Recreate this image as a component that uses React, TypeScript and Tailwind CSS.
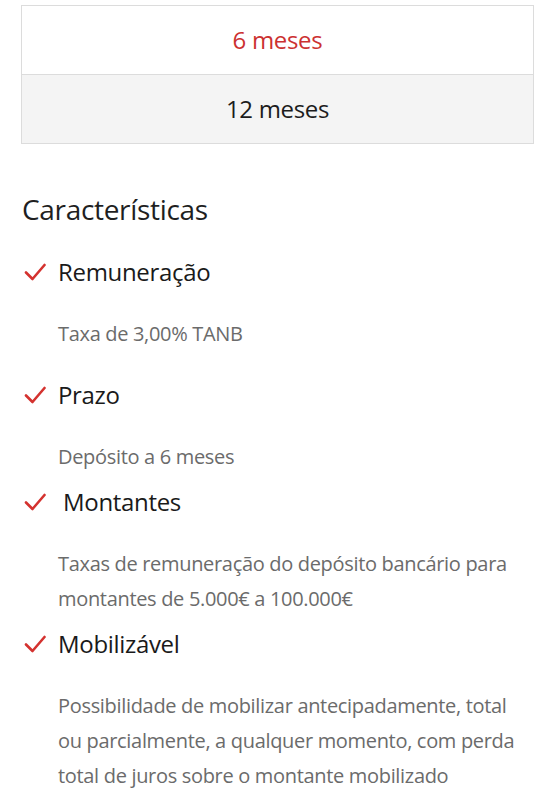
const font = { fontFamily: '"Open Sans", Lato, sans-serif' };

const Check = () => (
  <svg width="22" height="20" viewBox="0 0 22 20" className="shrink-0">
    <path d="M2 10.5 L8.5 17 L20.5 3" fill="none" stroke="#d4322f" strokeWidth="2.6" strokeLinecap="round" strokeLinejoin="round" />
  </svg>
);

type Item = { title: string; desc: string[]; after: string; indent?: string };

const items: Item[] = [
  { title: 'Remuneração', desc: ['Taxa de 3,00% TANB'], after: 'mb-[28px]' },
  { title: 'Prazo', desc: ['Depósito a 6 meses'], after: 'mb-[12px]' },
  {
    title: 'Montantes',
    desc: ['Taxas de remuneração do depósito bancário para', 'montantes de 5.000€ a 100.000€'],
    after: 'mb-[12px]',
    indent: 'ml-[5px]',
  },
  {
    title: 'Mobilizável',
    desc: [
      'Possibilidade de mobilizar antecipadamente, total',
      'ou parcialmente, a qualquer momento, com perda',
      'total de juros sobre o montante mobilizado',
    ],
    after: '',
  },
];

export default function App() {
  return (
    <div className="bg-white w-[555px] h-[800px] overflow-hidden px-[21px] pt-[5px] tracking-[-0.02em]" style={font}>
      <div className="border border-[#dcdcdc]">
        <div className="h-[68px] flex items-center justify-center text-[24px] text-[#cc3131]">6 meses</div>
        <div className="h-[69px] flex items-center justify-center text-[24px] text-[#1c1c1c] bg-[#f4f4f4] border-t border-[#dcdcdc]">
          12 meses
        </div>
      </div>

      <h2 className="mt-[47px] ml-[1px] text-[28px] leading-[36px] text-[#1f1f1f]">Características</h2>

      <div className="mt-[29px]">
        {items.map((it) => (
          <div key={it.title} className={it.after}>
            <div className="flex items-center h-[32px]">
              <div className="w-[37px] pl-[3px]">
                <Check />
              </div>
              <span className={`text-[24px] leading-[32px] text-[#1a1a1a] ${it.indent ?? ''}`}>{it.title}</span>
            </div>
            <div className="mt-[28px] pl-[37px] text-[20px] leading-[35px] text-[#6b6b6b]">
              {it.desc.map((l) => (
                <div key={l}>{l}</div>
              ))}
            </div>
          </div>
        ))}
      </div>
    </div>
  );
}
